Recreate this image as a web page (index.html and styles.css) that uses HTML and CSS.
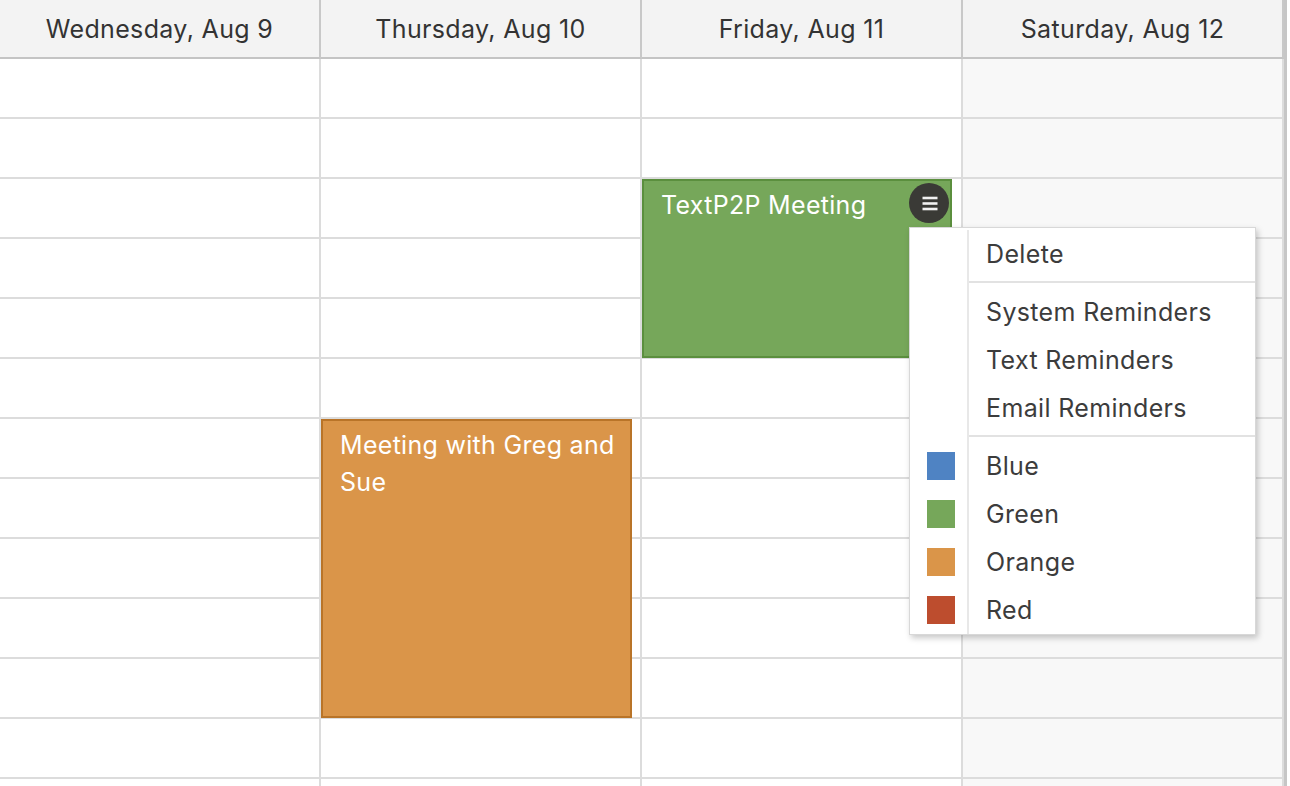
FILE: index.html
```html
<!DOCTYPE html>
<html>
<head>
<meta charset="utf-8">
<link rel="stylesheet" href="styles.css">
</head>
<body>
<div class="calendar">
  <div class="grid">
    <div class="header">
      <div class="hcell">Wednesday, Aug 9</div>
      <div class="hcell">Thursday, Aug 10</div>
      <div class="hcell">Friday, Aug 11</div>
      <div class="hcell">Saturday, Aug 12</div>
    </div>
    <div class="body">
      <div class="col">
        <div class="cell"></div><div class="cell"></div><div class="cell"></div><div class="cell"></div>
        <div class="cell"></div><div class="cell"></div><div class="cell"></div><div class="cell"></div>
        <div class="cell"></div><div class="cell"></div><div class="cell"></div><div class="cell"></div>
        <div class="cell"></div>
      </div>
      <div class="col">
        <div class="cell"></div><div class="cell"></div><div class="cell"></div><div class="cell"></div>
        <div class="cell"></div><div class="cell"></div><div class="cell"></div><div class="cell"></div>
        <div class="cell"></div><div class="cell"></div><div class="cell"></div><div class="cell"></div>
        <div class="cell"></div>
        <div class="event orange ev-greg">Meeting with Greg and Sue</div>
      </div>
      <div class="col">
        <div class="cell"></div><div class="cell"></div><div class="cell"></div><div class="cell"></div>
        <div class="cell"></div><div class="cell"></div><div class="cell"></div><div class="cell"></div>
        <div class="cell"></div><div class="cell"></div><div class="cell"></div><div class="cell"></div>
        <div class="cell"></div>
        <div class="event green ev-textp2p">TextP2P Meeting
          <div class="menu-btn">
            <svg width="40" height="40" viewBox="0 0 40 40">
              <line x1="13.5" y1="15" x2="28.5" y2="15" />
              <line x1="13.5" y1="20.5" x2="28.5" y2="20.5" />
              <line x1="13.5" y1="26" x2="28.5" y2="26" />
            </svg>
          </div>
        </div>
      </div>
      <div class="col weekend">
        <div class="cell"></div><div class="cell"></div><div class="cell"></div><div class="cell"></div>
        <div class="cell"></div><div class="cell"></div><div class="cell"></div><div class="cell"></div>
        <div class="cell"></div><div class="cell"></div><div class="cell"></div><div class="cell"></div>
        <div class="cell"></div>
      </div>
    </div>
  </div>
  <div class="edge"></div>

  <div class="menu">
    <div class="item"><div class="ic"></div><div class="label">Delete</div></div>
    <div class="sep"><div class="ic"></div><div class="line"></div></div>
    <div class="item"><div class="ic"></div><div class="label">System Reminders</div></div>
    <div class="item"><div class="ic"></div><div class="label">Text Reminders</div></div>
    <div class="item"><div class="ic"></div><div class="label">Email Reminders</div></div>
    <div class="sep"><div class="ic"></div><div class="line"></div></div>
    <div class="item"><div class="ic"><span class="swatch sw-blue"></span></div><div class="label">Blue</div></div>
    <div class="item"><div class="ic"><span class="swatch sw-green"></span></div><div class="label">Green</div></div>
    <div class="item"><div class="ic"><span class="swatch sw-orange"></span></div><div class="label">Orange</div></div>
    <div class="item"><div class="ic"><span class="swatch sw-red"></span></div><div class="label">Red</div></div>
  </div>
</div>
</body>
</html>
```
FILE: styles.css
```css
html, body {
  margin: 0;
  padding: 0;
  background: #ffffff;
}
body {
  font-family: Inter, "Noto Sans", "Liberation Sans", sans-serif;
  color: #333333;
}
.calendar {
  position: relative;
  display: flex;
  height: 786px;
  overflow: hidden;
}
.grid {
  width: 1284px;
  display: flex;
  flex-direction: column;
}
.edge {
  width: 3px;
  background: #c6c6c6;
}
.header {
  display: grid;
  grid-template-columns: repeat(4, 321px);
  height: 59px;
}
.hcell {
  background: #f3f3f3;
  border-right: 2px solid #c8c8c8;
  border-bottom: 2px solid #c4c4c4;
  display: flex;
  align-items: center;
  justify-content: center;
  font-size: 25px;
  letter-spacing: 0.35px;
  color: #333333;
}
.body {
  display: grid;
  grid-template-columns: repeat(4, 321px);
  flex: 1;
  overflow: hidden;
}
.col {
  position: relative;
  border-right: 2px solid #dcdcdc;
  background: #ffffff;
}
.col.weekend {
  background: #f8f8f8;
}
.cell {
  height: 58px;
  border-bottom: 2px solid #dcdcdc;
}
.event {
  position: absolute;
  box-sizing: border-box;
  padding: 6px 10px 6px 17px;
  color: #ffffff;
  font-size: 25px;
  letter-spacing: 0.3px;
  line-height: 37px;
  border: 2px solid;
}
.green {
  background: #76a75a;
  border-color: #5b8f3e;
}
.orange {
  background: #da9549;
  border-color: #b97428;
}
.ev-textp2p {
  left: 0;
  top: 120px;
  width: 310px;
  height: 179px;
}
.ev-greg {
  left: 0;
  top: 360px;
  width: 311px;
  height: 299px;
}
.menu-btn {
  position: absolute;
  top: 2px;
  right: 1px;
  width: 40px;
  height: 40px;
  border-radius: 50%;
  background: #3a3a36;
}
.menu-btn svg {
  display: block;
}
.menu-btn line {
  stroke: #f2f2f2;
  stroke-width: 2.6;
}
.menu {
  position: absolute;
  left: 909px;
  top: 227px;
  width: 347px;
  box-sizing: border-box;
  background: #ffffff;
  border: 1px solid #d8d8d8;
  box-shadow: 2px 3px 6px rgba(0, 0, 0, 0.22);
  padding-top: 2px;
  font-size: 25px;
  letter-spacing: 0.35px;
  color: #3c3c3c;
}
.item {
  display: flex;
  height: 48px;
}
.ic {
  width: 57px;
  border-right: 2px solid #e8e8e8;
  display: flex;
  align-items: center;
  flex-shrink: 0;
}
.label {
  padding-left: 17px;
  display: flex;
  align-items: center;
}
.sep {
  display: flex;
  height: 10px;
}
.sep .line {
  flex: 1;
  margin-top: 3px;
  height: 2px;
  background: #e2e2e2;
}
.swatch {
  display: block;
  width: 28px;
  height: 28px;
  margin-left: 17px;
}
.sw-blue { background: #4f83c3; }
.sw-green { background: #76a75a; }
.sw-orange { background: #da9549; }
.sw-red { background: #bd4d2e; }
```
